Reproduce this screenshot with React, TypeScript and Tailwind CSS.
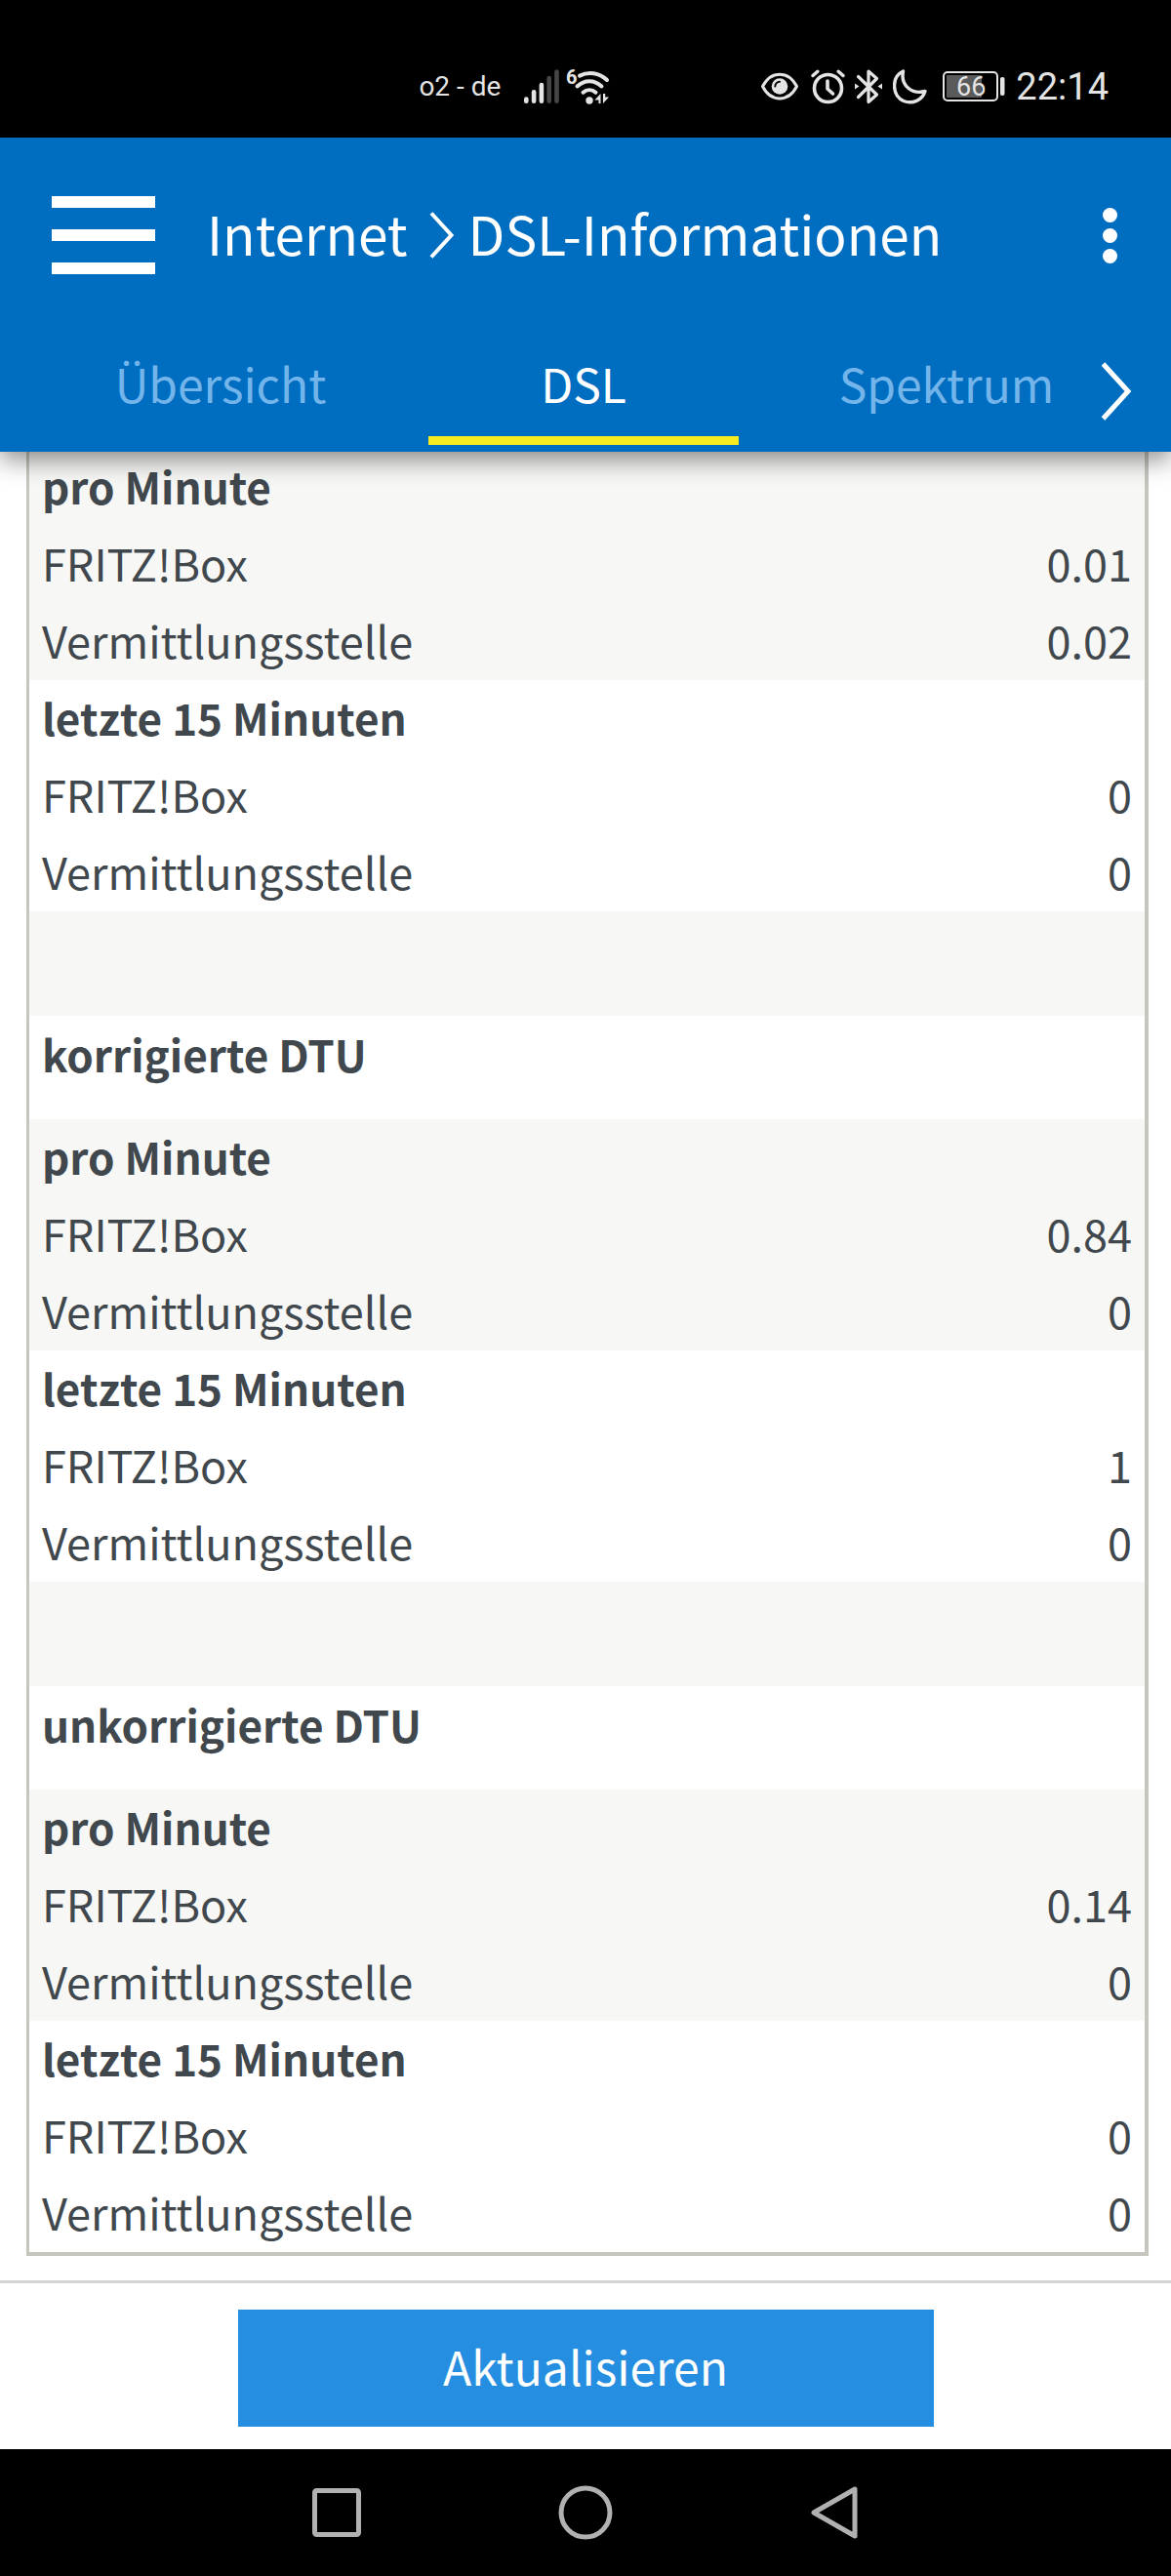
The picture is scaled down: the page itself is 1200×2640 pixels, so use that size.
import React, { useState } from 'react';

type Tone = 'gray' | 'white';

interface Group {
  title: string;
  tone: Tone;
  box: string;
  exchange: string;
}

interface Section {
  heading?: string;
  groups: Group[];
}

const sections: Section[] = [
  {
    groups: [
      { title: 'pro Minute', tone: 'gray', box: '0.01', exchange: '0.02' },
      { title: 'letzte 15 Minuten', tone: 'white', box: '0', exchange: '0' },
    ],
  },
  {
    heading: 'korrigierte DTU',
    groups: [
      { title: 'pro Minute', tone: 'gray', box: '0.84', exchange: '0' },
      { title: 'letzte 15 Minuten', tone: 'white', box: '1', exchange: '0' },
    ],
  },
  {
    heading: 'unkorrigierte DTU',
    groups: [
      { title: 'pro Minute', tone: 'gray', box: '0.14', exchange: '0' },
      { title: 'letzte 15 Minuten', tone: 'white', box: '0', exchange: '0' },
    ],
  },
];

const tabs = ['Übersicht', 'DSL', 'Spektrum'];

const StatusBar: React.FC = () => (
  <div className="flex h-[141px] items-center justify-end bg-black pt-[37px] pr-[64px] font-['Roboto',sans-serif] text-[#e4e4e4]">
    <span className="mr-6 text-[28px] leading-9">o2 - de</span>

    {/* Signal */}
    <svg width="36" height="36" viewBox="0 0 36 36" className="mr-1" aria-hidden="true">
      <g strokeWidth="4.6" strokeLinecap="round" stroke="#e4e4e4">
        <path d="M2.3 30.5V32.7" />
        <path d="M10.1 23.3V32.7" />
        <path d="M17.9 16V32.7" />
        <path d="M25.7 9V32.7" stroke="#464646" />
        <path d="M33.5 2.6V32.7" stroke="#464646" />
      </g>
    </svg>

    {/* WLAN */}
    <svg width="48" height="48" viewBox="-4 -6 48 48" className="mr-[155px]" aria-hidden="true">
      <text x="-1" y="15" fontSize="20" fontWeight="700" fill="#e4e4e4">6</text>
      <g fill="none" stroke="#e4e4e4" strokeWidth="4" strokeLinecap="round">
        <path d="M13 6.600C22 2 33 3.300 41 11" />
        <path d="M10.500 17.500C18 10.500 28 10.500 35.500 17.500" />
        <path d="M16.500 23.800C20.500 20.300 25.500 20.300 29.500 23.800" />
      </g>
      <circle cx="23" cy="32" r="3.700" fill="#e4e4e4" />
      <path d="M34.500 25V35H32.500V31.500H28.500ZM37 25H39.200V28.500H43L37 35Z" fill="#e4e4e4" />
    </svg>

    {/* Eye comfort */}
    <svg width="38" height="36" viewBox="0 0 38 36" className="mr-[13px]" aria-hidden="true">
      <path d="M1.500 17.500C10 1 28 1 36.500 17.500C28 34 10 34 1.500 17.500Z" fill="none" stroke="#e4e4e4" strokeWidth="3" strokeLinejoin="round" />
      <circle cx="19" cy="17.500" r="8.300" fill="#e4e4e4" />
      <path d="M14.300 17.500A5 5 0 0 1 19 12.800" fill="none" stroke="#000" strokeWidth="2" strokeLinecap="round" />
    </svg>

    {/* Alarm */}
    <svg width="35" height="36" viewBox="0 0 35 36" className="mr-[10px]" aria-hidden="true">
      <g fill="none" stroke="#e4e4e4" strokeLinecap="round">
        <circle cx="17.500" cy="19.500" r="14" strokeWidth="3.600" />
        <path d="M17 12V20L22.500 25" strokeWidth="3.600" strokeLinejoin="round" />
        <path d="M2 6.500L6.800 2.200M33 6.500L28.200 2.200" strokeWidth="3.400" />
      </g>
    </svg>

    {/* Bluetooth */}
    <svg width="28" height="36" viewBox="0 0 28 36" className="mr-[11px]" aria-hidden="true">
      <path d="M3.500 7.500L22.500 26L14 33.500V2L22.500 9.500L3.500 28.500" fill="none" stroke="#e4e4e4" strokeWidth="3.200" strokeLinecap="round" strokeLinejoin="round" />
      <path d="M0 14.500L4.500 17.500L0 20.500ZM28 14.500L23.500 17.500L28 20.500Z" fill="#e4e4e4" />
    </svg>

    {/* Moon */}
    <svg width="35" height="36" viewBox="0 0 35 36" className="mr-4" aria-hidden="true">
      <path d="M10.500 2C-2 8-1 27 11 32.500C20 36 30 32 33 22.500C20 26 7.500 17 10.500 2Z" fill="none" stroke="#e4e4e4" strokeWidth="3.400" strokeLinejoin="round" />
    </svg>

    {/* Battery */}
    <svg width="64" height="36" viewBox="0 0 64 36" className="mr-[11px]" aria-hidden="true">
      <rect x="1" y="3" width="55" height="29" rx="4" fill="none" stroke="#e4e4e4" strokeWidth="2" />
      <rect x="4" y="6" width="36" height="23" rx="1" fill="#5a5a5a" />
      <rect x="59" y="8" width="4.500" height="19" rx="2" fill="#e4e4e4" />
      <text x="14" y="27" fontSize="27" fill="#e4e4e4">66</text>
    </svg>

    <span className="text-[38px] leading-9">22:14</span>
  </div>
);

interface HeaderProps {
  active: string;
  onSelect: (tab: string) => void;
}

const Header: React.FC<HeaderProps> = ({ active, onSelect }) => (
  <header className="relative z-10 bg-[#006ec0] text-white shadow-[0_8px_24px_rgba(0,0,0,0.45)]">
    <div className="flex h-[200px] items-center pr-[55px] pl-[53px]">
      <button type="button" aria-label="Menü" className="mr-[53px] flex w-[106px] flex-col gap-[22px]">
        <span className="h-3 bg-white" />
        <span className="h-3 bg-white" />
        <span className="h-3 bg-white" />
      </button>
      <h1 className="flex flex-1 items-center text-[55px] leading-[80px]">
        <a href="#internet" className="pb-[6px]">Internet</a>
        <svg width="26" height="48" viewBox="0 0 26 48" className="mr-[14px] ml-[22px]" aria-hidden="true">
          <path d="M2 1.500L22.500 24L2 46.500" fill="none" stroke="currentColor" strokeWidth="4" />
        </svg>
        <span className="pb-[6px]">DSL-Informationen</span>
      </h1>
      <button type="button" aria-label="Mehr" className="flex flex-col gap-[6px]">
        <span className="size-[15px] rounded-full bg-white" />
        <span className="size-[15px] rounded-full bg-white" />
        <span className="size-[15px] rounded-full bg-white" />
      </button>
    </div>

    <nav className="relative flex pr-11 pb-[7px] pl-10">
      {tabs.map((tab) => (
        <div key={tab} className="flex-1 px-[27px]">
          <button
            type="button"
            onClick={() => onSelect(tab)}
            className={`h-[115px] w-full border-b-[9px] pb-1 text-[48px] leading-[100px] whitespace-nowrap ${
              tab === active ? 'border-[#f5eb1e] text-white' : 'border-transparent text-[#73b5eb]'
            }`}
          >
            {tab}
          </button>
        </div>
      ))}
      <button type="button" aria-label="Weitere Reiter" className="absolute top-[30px] right-[40px]">
        <svg width="32" height="60" viewBox="0 0 32 60" aria-hidden="true">
          <path d="M2.500 2L28 30L2.500 58" fill="none" stroke="currentColor" strokeWidth="5" />
        </svg>
      </button>
    </nav>
  </header>
);

const ValueRow: React.FC<{ label: string; value: string }> = ({ label, value }) => (
  <tr className="h-[79px]">
    <th scope="row" className="pb-1 pl-[13px] text-left font-normal">{label}</th>
    <td className="pr-[13px] pb-1 text-right">{value}</td>
  </tr>
);

const App: React.FC = () => {
  const [active, setActive] = useState('DSL');

  return (
    <div className="flex min-h-screen flex-col bg-white font-['Noto_Sans_CJK_SC','Noto_Sans',sans-serif] text-[#41484d]">
      <StatusBar />
      <Header active={active} onSelect={setActive} />

      {/* The list is scrolled slightly under the header */}
      <main className="-mt-[3px] flex-1 pr-[23px] pb-[25px] pl-[27px]">
        <div className="border-r-4 border-b-4 border-l-[3px] border-[#c6c6bf]">
          <table className="w-full border-collapse text-[45px] leading-[60px]">
            {sections.map((section, i) => (
              <React.Fragment key={i}>
                {section.heading && (
                  <tbody>
                    <tr className="h-[107px] bg-[#f7f7f6]">
                      <td colSpan={2} />
                    </tr>
                    <tr className="h-[106px]">
                      <th colSpan={2} className="pb-7 pl-[13px] text-left text-[44px] font-bold">{section.heading}</th>
                    </tr>
                  </tbody>
                )}
                {section.groups.map((group) => (
                  <tbody key={group.title} className={group.tone === 'gray' ? 'bg-[#f7f7f6]' : 'bg-white'}>
                    <tr className="h-[79px]">
                      <th colSpan={2} className="pb-1 pl-[13px] text-left text-[44px] font-bold">{group.title}</th>
                    </tr>
                    <ValueRow label="FRITZ!Box" value={group.box} />
                    <ValueRow label="Vermittlungsstelle" value={group.exchange} />
                  </tbody>
                ))}
              </React.Fragment>
            ))}
          </table>
        </div>
      </main>

      <footer className="flex justify-center border-t-[3px] border-[#d4d4d4] pt-[27px] pb-[23px]">
        <button type="button" className="h-[120px] w-[713px] bg-[#268ee0] pb-[6px] text-[48px] leading-[72px] text-white">
          Aktualisieren
        </button>
      </footer>

      {/* Android navigation */}
      <div className="flex h-[130px] items-center justify-center gap-[200px] bg-black text-[#b1b1b1]">
        <button type="button" aria-label="Letzte Apps">
          <svg width="56" height="56" viewBox="0 0 56 56" fill="none" stroke="currentColor" strokeWidth="5">
            <rect x="6.500" y="5.500" width="45" height="45" rx="2" />
          </svg>
        </button>
        <button type="button" aria-label="Startseite">
          <svg width="56" height="56" viewBox="0 0 56 56" fill="none" stroke="currentColor" strokeWidth="5">
            <circle cx="28" cy="28" r="25" />
          </svg>
        </button>
        <button type="button" aria-label="Zurück">
          <svg width="56" height="56" viewBox="0 0 56 56" fill="none" stroke="currentColor" strokeWidth="5" strokeLinejoin="round">
            <path d="M48 4V52L6 28Z" />
          </svg>
        </button>
      </div>
    </div>
  );
};

export default App;
